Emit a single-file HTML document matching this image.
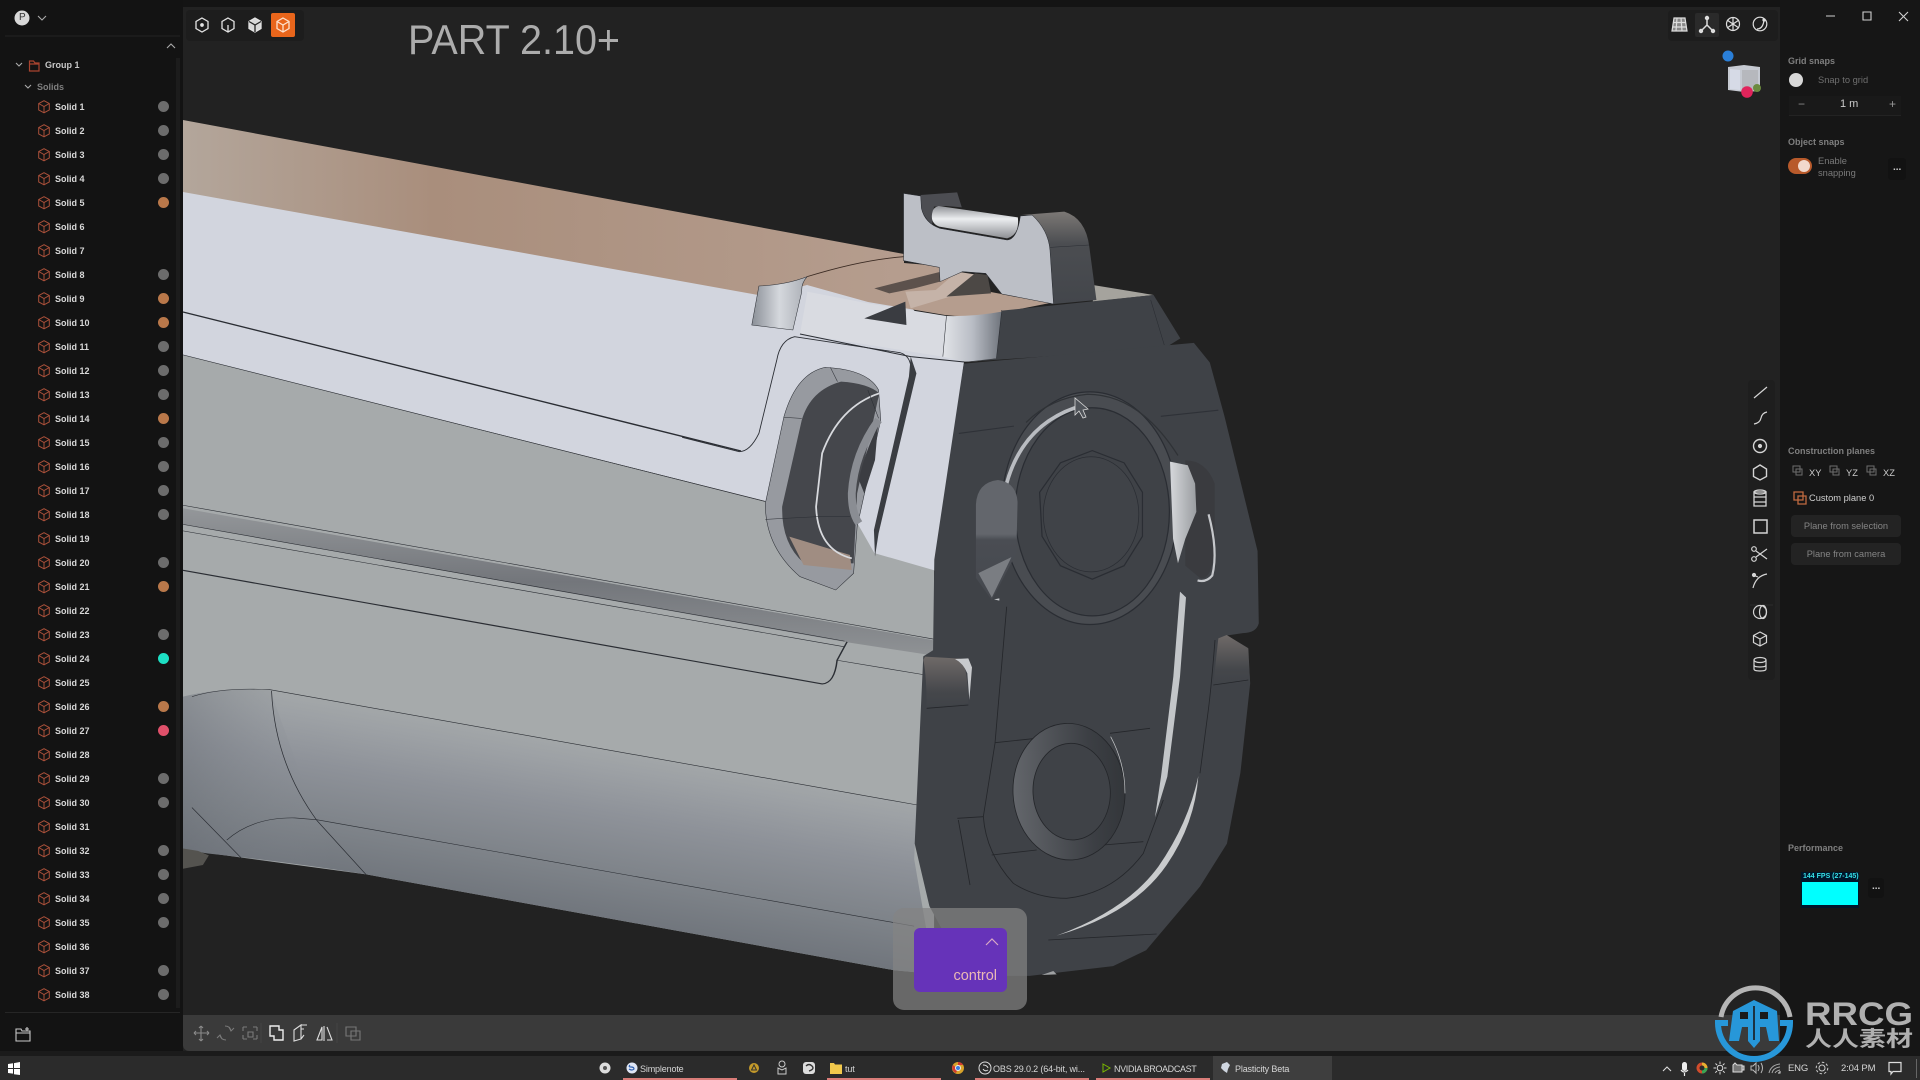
<!DOCTYPE html>
<html><head><meta charset="utf-8"><title>Plasticity</title>
<style>
html,body{margin:0;padding:0;width:1920px;height:1080px;overflow:hidden;background:#222;font-family:"Liberation Sans","Noto Sans CJK SC",sans-serif}
.a{position:absolute}
#vp{position:absolute;left:0;top:0;width:1920px;height:1080px}
#left{position:absolute;left:0;top:0;width:183px;height:1051px;background:#131313}
#right{position:absolute;left:1780px;top:0;width:140px;height:1056px;background:#161616}
#top{position:absolute;left:183px;top:0;width:1597px;height:7px;background:#141414}
#list{position:absolute;left:0;top:95px;width:176px}
.r{height:24px;position:relative;color:#d8d8d8;font-size:9px;font-weight:bold;line-height:24px}
.r span{position:absolute;left:55px;top:0}
.r svg{position:absolute;left:38px;top:5px}
.r i{position:absolute;left:157.5px;top:5.5px;width:11px;height:11px;border-radius:50%;background:#6c6c6c}
.o i{background:#b9784a}.c i{background:#1de0c4}.p i{background:#e0506a}.n i{display:none}
.t{position:absolute;white-space:nowrap}
.lab{color:#7f7f7f;font-size:9px;font-weight:bold}
.tb{position:absolute;top:1062px;color:#d6d6d6;font-size:9px;letter-spacing:-.15px;white-space:nowrap;line-height:14px}
.ul{position:absolute;top:1078px;height:2px;background:#d97c78}
.btn{position:absolute;left:1791px;width:110px;height:22px;background:#232323;border-radius:4px;color:#858585;font-size:9.3px;text-align:center;line-height:22px}
</style></head><body>
<svg id="vp" viewBox="0 0 1920 1080" xmlns="http://www.w3.org/2000/svg">
<defs>
<linearGradient id="tan" gradientUnits="userSpaceOnUse" x1="183" y1="0" x2="900" y2="0"><stop offset="0" stop-color="#b3a69b"/><stop offset=".35" stop-color="#a98e7c"/><stop offset="1" stop-color="#b59d8e"/></linearGradient>
<linearGradient id="low" gradientUnits="userSpaceOnUse" x1="800" y1="880" x2="700" y2="1330"><stop offset="0" stop-color="#a5a9aa"/><stop offset=".15" stop-color="#9da1a5"/><stop offset=".4" stop-color="#8e9299"/><stop offset=".75" stop-color="#7d8288"/><stop offset="1" stop-color="#70757c"/></linearGradient>
<linearGradient id="lowl" gradientUnits="userSpaceOnUse" x1="0" y1="0" x2="300" y2="0"><stop offset="0" stop-color="#6a6f76" stop-opacity=".4"/><stop offset="1" stop-color="#8d9299" stop-opacity="0"/></linearGradient>
<linearGradient id="rail" x1="0" y1="0" x2="0" y2="1"><stop offset="0" stop-color="#94979a"/><stop offset=".5" stop-color="#73767b"/><stop offset="1" stop-color="#8f9295"/></linearGradient>
<linearGradient id="rnd" x1="0" y1="0" x2="1" y2="0"><stop offset="0" stop-color="#e2e4e8"/><stop offset=".5" stop-color="#b9bdc5"/><stop offset="1" stop-color="#6f747c"/></linearGradient>
<linearGradient id="rnd2" x1="0" y1="0" x2="1" y2="0"><stop offset="0" stop-color="#8a8f97"/><stop offset=".5" stop-color="#d5d8dd"/><stop offset="1" stop-color="#a9adb4"/></linearGradient>
<linearGradient id="pill" x1="0" y1="0" x2="0" y2="1"><stop offset="0" stop-color="#8f9196"/><stop offset=".4" stop-color="#eceef0"/><stop offset="1" stop-color="#8d8f94"/></linearGradient>
<linearGradient id="sr" x1="0" y1="0" x2="0" y2="1"><stop offset="0" stop-color="#7c7875"/><stop offset=".35" stop-color="#4b4d51"/><stop offset="1" stop-color="#43464b"/></linearGradient>
<linearGradient id="ring" x1="0" y1="0" x2="1" y2="0"><stop offset="0" stop-color="#63666b"/><stop offset=".7" stop-color="#3c3f44"/><stop offset="1" stop-color="#33363a"/></linearGradient>
<linearGradient id="blk" x1="0" y1="0" x2="0" y2="1"><stop offset="0" stop-color="#6f6a68"/><stop offset=".7" stop-color="#45474b"/><stop offset="1" stop-color="#404348"/></linearGradient>
<linearGradient id="bmp" x1="0" y1="0" x2="0" y2="1"><stop offset="0" stop-color="#63666c"/><stop offset=".45" stop-color="#63666c"/><stop offset=".5" stop-color="#4a4d53"/><stop offset="1" stop-color="#45484e"/></linearGradient>
<linearGradient id="str" x1="0" y1="0" x2="1" y2="0"><stop offset="0" stop-color="#d6d8db"/><stop offset="1" stop-color="#9a9da1"/></linearGradient>
</defs>
<rect width="1920" height="1080" fill="#222"/>

<!-- light side of slide -->
<path fill="#d2d5de" d="M183,190 L764,295 L807,283 L904,300 L964,362 L936,571 L875,557 L765,501 L183,355 Z"/>

<!-- slide: zoom-11 coords -->
<g transform="translate(183,400) scale(.4974,.3827)" fill="none" stroke="#2a2d33" stroke-width="1.5">
<path stroke="none" fill="#a6aaab" d="M0,-118 L360,0 L1170,265 L1355,320 L1390,400 L1510,445 L1510,1500 L1430,1490 L370,1240 L0,1175 Z"/>
<path d="M0,-118 L1170,265"/>
<path stroke="none" fill="url(#rail)" d="M0,283 L1510,628 L1510,668 L1330,632 L0,325 Z"/>
<path d="M0,275 L1510,625"/>
<path d="M0,325 L1330,630"/>
<path d="M0,342 L1330,645"/>
<path stroke-width="3" d="M0,445 L1285,742 Q1310,740 1315,680 L1335,632"/>
<path d="M1315,680 L1490,718"/>
<path stroke="none" fill="url(#low)" d="M0,775 Q80,750 175,757 L1475,1058 L1470,1200 L1510,1500 L1430,1490 L370,1240 Q200,1205 50,1185 L0,1175 Z"/>
<path stroke="none" fill="url(#lowl)" d="M0,775 Q80,750 175,757 L270,1100 L368,1240 L0,1175 Z"/>
<path d="M18,775 Q80,750 175,757 L1475,1058"/>
<path d="M178,760 Q185,950 270,1100 L368,1240"/>
<path d="M88,1150 Q140,1090 225,1092 L270,1097 L1470,1375"/>
<path d="M18,1065 L118,1198"/>
<path stroke="none" fill="#54534f" d="M0,1172 L30,1178 L52,1190 L40,1215 L0,1225 Z"/>
</g>

<!-- long slide line -->
<path d="M183,312 L741,451" fill="none" stroke="#2a2d33" stroke-width="1.4"/>

<!-- top + upper slide: zoom-8 coords -->
<g transform="translate(700,160) scale(.35714,.33333)" stroke="#2a2d33" stroke-width="2.5">
<path stroke="none" fill="url(#tan)" transform="scale(2.8,3) translate(-700,-160)" d="M183,120 L904,254 L904,265 L807,285 L764,296 L183,192 Z"/>
<path fill="url(#tan)" transform="scale(2.8,3) translate(-700,-160)" stroke="none" d="M807,285 Q860,265 904,263 L940,266 L980,290 L1050,303 L1000,313 Q970,318 945,315 L868,302 Z"/>
<path fill="none" stroke="#3a2a22" d="M300,350 Q450,300 570,290"/>
<path fill="url(#rnd2)" stroke-width="1.5" d="M165,378 Q240,375 300,350 Q283,370 285,395 L260,510 L145,495 Z"/>
<path fill="#d9dbe1" stroke="none" d="M300,395 L470,430 L690,468 L680,590 L280,522 L300,400 Z"/>
<path fill="url(#rnd)" stroke="none" d="M690,468 Q770,470 845,455 L830,595 Q780,605 740,605 L680,590 Z"/>
<path fill="none" stroke-width="1.5" d="M690,468 L680,590"/>
<path fill="none" stroke-width="3" d="M280,522 L590,590 L740,606"/>
<path fill="none" stroke-width="2.5" d="M-50,832 L110,875 Q140,875 165,820 L215,600 Q225,540 265,530 L560,578 Q595,590 590,640"/>
<path stroke="none" fill="#3a3d42" d="M590,590 L606,640 L500,1120 L490,1190 L487,1110 L585,650 Z"/>

<!-- ejection port -->
<path fill="#979aa0" stroke-width="1.5" d="M350,622 Q470,628 500,690 L506,780 L440,1100 L430,1240 L380,1290 L280,1250 Q182,1160 183,1030 L235,770 Q270,640 350,622 Z"/>
<path fill="#45474c" stroke="none" d="M395,665 Q470,670 502,700 L440,1000 L430,1210 L290,1208 Q228,1150 230,1040 L285,780 Q310,690 395,665 Z"/>
<path fill="#a08d82" stroke="none" d="M250,1130 L420,1185 L425,1230 L290,1215 Z"/>
<path fill="none" stroke="#d8dade" stroke-width="5" d="M502,700 Q390,740 342,880 L325,1040 Q330,1170 425,1195"/>
<path fill="none" stroke="#8a8d93" stroke-width="22" d="M500,780 Q432,880 425,1000 Q425,1060 445,1090"/>
<path fill="#3b3d42" stroke="none" d="M498,800 Q460,880 445,960 L460,1000 L490,900 Z"/>
<path fill="none" stroke-width="1.5" d="M183,1078 L330,1070 L420,1070 M235,772 L285,775 M365,622 L385,665 M500,775 L470,690"/>

<!-- notch -->
<path stroke="none" fill="#3a3c41" d="M460,475 L575,425 L578,495 Z"/>
<path stroke="none" fill="#5c514c" d="M488,385 L675,335 L672,365 L600,385 L530,400 Z"/>
<path stroke="none" fill="#c5b3a8" d="M575,395 L660,390 L720,335 L780,345 L805,395 L700,410 L590,445 Z"/>
<path stroke="none" fill="#4c4845" d="M770,340 L805,345 L815,400 L690,410 Z"/>

<!-- block behind sight -->
<path stroke="none" fill="#a5a39d" d="M1100,375 L1270,405 L1100,425 Z"/>
<path stroke="none" fill="#3f4247" d="M845,452 L1270,405 L1345,535 L1300,565 L740,606 L830,595 Z"/>
<path fill="none" stroke-width="1.5" d="M845,450 L830,595 M1262,420 L1300,555"/>
<!-- sight -->
<path fill="url(#sr)" stroke="none" d="M900,165 L1020,155 Q1080,175 1090,260 L1110,420 L990,432 L980,270 Q975,210 930,165 Z"/>
<path fill="none" stroke-width="1.5" d="M980,262 L1090,255"/>
<path fill="#4c4d52" stroke="none" d="M618,105 L720,97 L733,142 L690,138 L655,140 L650,195 Q625,170 618,140 Z"/>
<path fill="#bcbfc6" stroke-width="1.5" d="M570,100 L618,108 L620,145 Q630,190 672,205 L860,240 Q888,238 897,168 L930,165 Q975,210 980,270 L990,432 L845,402 L800,340 L735,335 L672,365 L670,322 L570,302 Z"/>
<path fill="url(#pill)" stroke="none" d="M668,138 L890,172 Q895,225 860,235 L670,200 Q645,190 650,160 Q652,142 668,138 Z"/>
</g>

<!-- barrel face: display coords -->
<g transform="scale(1.2245)">
<path fill="#3f4247" d="M787,297 L975,280 L988,296 L1000,340 L1027,450 L1028,509 Q1026,517 1015,517 L1002,519 L1019,529 L1021,558 L1013,631 L1002,689 L980,724 L936,776 L909,789 L841,797 L790,797 L759,740 L747,689 L754,536 L762,531 L763,457 Z"/>
<path d="M783,354 L828,348 M948,340 L995,335" fill="none" stroke="#2a2d33" stroke-width=".9" opacity=".8"/>
<ellipse cx="890" cy="415" rx="72" ry="95" fill="#494c51" stroke="#2a2d33"/>
<ellipse cx="892" cy="418" rx="63" ry="85" fill="#3f4247" stroke="#2a2d33"/>
<polygon points="866,378 892,368 918,378 933,402 933,438 918,462 892,473 866,462 851,438 849,402" fill="#3f4247" stroke="#2a2d33"/>
<ellipse cx="891" cy="420" rx="39" ry="47" fill="#404348" stroke="#2a2d33" stroke-width=".6"/>
<path d="M822,395 Q835,348 878,333" fill="none" stroke="#b9bcc1" stroke-width="3"/>
<path d="M838,345 Q858,325 888,322 Q930,322 962,372" fill="none" stroke="#2f3236" stroke-width="1"/>
<path d="M968,376 Q985,376 992,395 L992,445 Q990,475 980,472 L968,462 Z" fill="#3a3b3f"/>
<path d="M955.500,377 L970,380 L976,395 L977,418 L968,440 L962,460 L958,440 Z" fill="url(#str)"/>
<path d="M987,420 Q995,450 990,470 Q985,476 978,474" fill="none" stroke="#c5c7cb" stroke-width="1.800"/>
<path d="M797,412 Q798,394 815,392 Q830,394 831,410 L830,452 L810,490 L797,472 Z" fill="url(#bmp)"/>
<path d="M799,468 L826,455 L810,488 Z" fill="#7a7d82"/>
</g>

<!-- lower face: zoom-9 coords -->
<g transform="translate(880,560) scale(.33333)" fill="none" stroke="#24262a" stroke-width="2.5">
<path stroke="none" fill="url(#blk)" d="M135,290 L240,296 Q262,310 265,430 L140,442 Q140,350 130,300 Z"/>
<path stroke="none" fill="#c8cacd" d="M225,297 L265,295 L276,322 L268,420 L262,340 Q250,310 225,297 Z"/>
<path stroke="none" fill="url(#blk)" d="M1015,235 L1040,225 L1105,265 L1110,365 L1000,372 Z"/>
<path d="M1000,375 L1105,360"/>
<path d="M1005,240 Q995,370 985,450 L960,640"/>
<path d="M380,140 L345,550 L310,770 Q318,880 400,970 Q470,1015 560,1015 Q700,1000 790,880 L850,720"/>
<path d="M232,775 L310,770 M235,780 L270,975"/>
<path d="M345,548 L470,535 M690,520 L810,505 M335,885 L470,870 M670,855 L790,845 M505,1140 L830,1122 M265,435 L140,445"/>
<ellipse cx="567" cy="695" rx="168" ry="205" fill="url(#ring)" transform="rotate(-3 567 695)"/>
<ellipse cx="575" cy="695" rx="116" ry="145" fill="#3f4247" transform="rotate(-3 575 695)"/>
<path stroke="#c8cacc" stroke-width="2" d="M692,530 Q735,610 735,700"/>
<path stroke="none" fill="#c3c6c9" d="M900,95 L918,112 L900,350 L862,650 L825,772 L843,650 L880,350 Z"/>
<path stroke="none" fill="#c9cbcd" d="M955,648 Q945,790 860,915 Q760,1060 530,1127 Q740,1050 835,920 Q925,790 955,648 Z"/>
<path stroke="none" fill="#9fa1a3" d="M485,1245 L520,1233 L530,1243 Z"/>
<path stroke="none" fill="#c5c7ca" d="M342,118 L358,115 L358,122 Z"/>
</g>

<!-- cursor -->
<path d="M1075,398 L1075,415 L1079,411 L1083,418 L1086,417 L1083,410 L1088,409 Z" fill="#50545a" stroke="#d8d8d8" stroke-width=".8"/>

<!-- PART text -->
<text x="408" y="54" font-family="Liberation Sans" font-size="42" fill="#acacac" textLength="212" lengthAdjust="spacingAndGlyphs">PART 2.10+</text>
</svg>

<div id="top"></div>

<!-- top-left toolbar -->
<svg class="a" style="left:183px;top:7px" width="125" height="36" fill="none" stroke="#e4e4e4" stroke-width="1.3">
<rect x="3" y="3" width="118" height="31" rx="4" fill="#1d1d1d" stroke="none"/>
<path d="M19 11l6 3.5v7L19 25l-6-3.5v-7z"/><circle cx="19" cy="18" r="1.2" fill="#e4e4e4"/>
<path d="M45 11l6 3.5v7L45 25l-6-3.5v-7zM45 18v7"/>
<path d="M72 11l6 3.5v7L72 25l-6-3.5v-7z" fill="#d8d8d8"/><path d="M66 14.5l6 3.5 6-3.5M72 18v7" stroke="#222"/>
<rect x="88" y="6" width="24" height="24" rx="2" fill="#e8651b" stroke="none"/>
<path d="M100 11l6 3.5v7L100 25l-6-3.5v-7zM94 14.5l6 3.5 6-3.5M100 18v7" stroke="#fde0cc"/>
</svg>

<!-- left panel -->
<div id="left">
<svg class="a" style="left:0;top:0" width="183" height="100" fill="none" stroke="#aaa" stroke-width="1.2">
<circle cx="22" cy="18" r="7.5" fill="#d8d8d8" stroke="none"/>
<path d="M38 16l4 4 4-4M167 48l4-4 4 4M16 63l3 3 3-3M25 85l3 3 3-3" stroke-width="1.1"/>
<path d="M5 36H180" stroke="#232323" stroke-width="1"/>
<path d="M29.5 61h4l1.5 2h4v8h-9.500zM29.500 64h9.500" stroke="#a8432f"/>
</svg>
<div class="t" style="left:19px;top:12px;font-size:10px;color:#333">P</div>
<div class="t" style="left:45px;top:60px;font-size:9px;font-weight:bold;color:#c8c8c8">Group 1</div>
<div class="t" style="left:37px;top:82px;font-size:9px;font-weight:bold;color:#7f7f7f">Solids</div>
<svg width="0" height="0" style="position:absolute"><defs><g id="cb" fill="none" stroke="#a9503a" stroke-width="1"><path d="M6 .7l5.300 2.800v6.500L6 12.800.7 10V3.500zM.7 3.500L6 6.500l5.300-3M6 6.500v6.300"/></g></defs></svg>
<div id="list">
<div class="r"><svg width="13" height="15"><use href="#cb"/></svg><span>Solid 1</span><i></i></div>
<div class="r"><svg width="13" height="15"><use href="#cb"/></svg><span>Solid 2</span><i></i></div>
<div class="r"><svg width="13" height="15"><use href="#cb"/></svg><span>Solid 3</span><i></i></div>
<div class="r"><svg width="13" height="15"><use href="#cb"/></svg><span>Solid 4</span><i></i></div>
<div class="r o"><svg width="13" height="15"><use href="#cb"/></svg><span>Solid 5</span><i></i></div>
<div class="r n"><svg width="13" height="15"><use href="#cb"/></svg><span>Solid 6</span><i></i></div>
<div class="r n"><svg width="13" height="15"><use href="#cb"/></svg><span>Solid 7</span><i></i></div>
<div class="r"><svg width="13" height="15"><use href="#cb"/></svg><span>Solid 8</span><i></i></div>
<div class="r o"><svg width="13" height="15"><use href="#cb"/></svg><span>Solid 9</span><i></i></div>
<div class="r o"><svg width="13" height="15"><use href="#cb"/></svg><span>Solid 10</span><i></i></div>
<div class="r"><svg width="13" height="15"><use href="#cb"/></svg><span>Solid 11</span><i></i></div>
<div class="r"><svg width="13" height="15"><use href="#cb"/></svg><span>Solid 12</span><i></i></div>
<div class="r"><svg width="13" height="15"><use href="#cb"/></svg><span>Solid 13</span><i></i></div>
<div class="r o"><svg width="13" height="15"><use href="#cb"/></svg><span>Solid 14</span><i></i></div>
<div class="r"><svg width="13" height="15"><use href="#cb"/></svg><span>Solid 15</span><i></i></div>
<div class="r"><svg width="13" height="15"><use href="#cb"/></svg><span>Solid 16</span><i></i></div>
<div class="r"><svg width="13" height="15"><use href="#cb"/></svg><span>Solid 17</span><i></i></div>
<div class="r"><svg width="13" height="15"><use href="#cb"/></svg><span>Solid 18</span><i></i></div>
<div class="r n"><svg width="13" height="15"><use href="#cb"/></svg><span>Solid 19</span><i></i></div>
<div class="r"><svg width="13" height="15"><use href="#cb"/></svg><span>Solid 20</span><i></i></div>
<div class="r o"><svg width="13" height="15"><use href="#cb"/></svg><span>Solid 21</span><i></i></div>
<div class="r n"><svg width="13" height="15"><use href="#cb"/></svg><span>Solid 22</span><i></i></div>
<div class="r"><svg width="13" height="15"><use href="#cb"/></svg><span>Solid 23</span><i></i></div>
<div class="r c"><svg width="13" height="15"><use href="#cb"/></svg><span>Solid 24</span><i></i></div>
<div class="r n"><svg width="13" height="15"><use href="#cb"/></svg><span>Solid 25</span><i></i></div>
<div class="r o"><svg width="13" height="15"><use href="#cb"/></svg><span>Solid 26</span><i></i></div>
<div class="r p"><svg width="13" height="15"><use href="#cb"/></svg><span>Solid 27</span><i></i></div>
<div class="r n"><svg width="13" height="15"><use href="#cb"/></svg><span>Solid 28</span><i></i></div>
<div class="r"><svg width="13" height="15"><use href="#cb"/></svg><span>Solid 29</span><i></i></div>
<div class="r"><svg width="13" height="15"><use href="#cb"/></svg><span>Solid 30</span><i></i></div>
<div class="r n"><svg width="13" height="15"><use href="#cb"/></svg><span>Solid 31</span><i></i></div>
<div class="r"><svg width="13" height="15"><use href="#cb"/></svg><span>Solid 32</span><i></i></div>
<div class="r"><svg width="13" height="15"><use href="#cb"/></svg><span>Solid 33</span><i></i></div>
<div class="r"><svg width="13" height="15"><use href="#cb"/></svg><span>Solid 34</span><i></i></div>
<div class="r"><svg width="13" height="15"><use href="#cb"/></svg><span>Solid 35</span><i></i></div>
<div class="r n"><svg width="13" height="15"><use href="#cb"/></svg><span>Solid 36</span><i></i></div>
<div class="r"><svg width="13" height="15"><use href="#cb"/></svg><span>Solid 37</span><i></i></div>
<div class="r"><svg width="13" height="15"><use href="#cb"/></svg><span>Solid 38</span><i></i></div>
</div>
<div class="a" style="left:176px;top:58px;width:4px;height:950px;background:#1c1c1c"></div>
<div class="a" style="left:5px;top:1012px;width:175px;height:1px;background:#262626"></div>
<svg class="a" style="left:14px;top:1026px" width="18" height="18" fill="none" stroke="#c8c8c8" stroke-width="1.1"><path d="M2 3h5l1 2h8v10H2zM2 7h14M13 1v4M11 3h4"/></svg>
</div>

<!-- bottom toolbar -->
<div class="a" style="left:183px;top:1015px;width:1597px;height:36px;background:#3a3a3a;border-radius:0 0 0 6px"></div>
<div class="a" style="left:0;top:1051px;width:1920px;height:5px;background:#1b1b1b"></div>
<svg class="a" style="left:183px;top:1015px" width="200" height="36" fill="none" stroke="#8a8a8a" stroke-width="1.1">
<path d="M18 11v15M11 18h15M18 11l-2 2M18 11l2 2M18 26l-2-2M18 26l2-2M11 18l2-2M11 18l2 2M26 18l-2-2M26 18l-2 2"/>
<path d="M37 20q1 5 6 5M48 16q-1-5-6-5M46 12l2 4 3-3M39 24l-2-4-3 3" stroke="#7a7a7a"/>
<path d="M60 12h4M70 12h4M60 24h4M70 24h4M60 12v4M60 20v4M74 12v4M74 20v4M65 17h5v5h-5z" stroke="#7a7a7a"/>
<path d="M87 11h9v4h4v10h-9v-4h-4z" stroke="#eee" stroke-width="1.4"/>
<path d="M111 15l7-5v14l-7 2zM118 10h6M118 14h3M118 24l3-4" stroke="#ddd"/>
<path d="M134 25l5-13v13zM144 12l5 13h-5M141 11v15" stroke="#ddd"/>
<path d="M163 12h10v9h-10zM168 16h9v9h-9z" stroke="#777"/>
<path d="M78 8V28M154 8V28" stroke="#444" stroke-width="1"/>
</svg>

<!-- control overlay -->
<div class="a" style="left:893px;top:908px;width:134px;height:102px;border-radius:11px;background:rgba(132,132,132,.72)"></div>
<div class="a" style="left:914px;top:928px;width:93px;height:64px;border-radius:6px;background:#6633b9"></div>
<svg class="a" style="left:985px;top:937px" width="16" height="10" fill="none" stroke="#d9a9c5" stroke-width="1.2"><path d="M1 8l6-6 6 6"/></svg>
<div class="t" style="right:923px;top:967px;font-size:14.5px;color:#eab9b5;line-height:18px">control</div>

<!-- top-right toolbar -->
<svg class="a" style="left:1665px;top:7px" width="115" height="36" fill="none" stroke="#dedede" stroke-width="1.2">
<rect x="3" y="3" width="110" height="31" rx="4" fill="#1d1d1d" stroke="none"/>
<rect x="30" y="6" width="24" height="24" rx="2" fill="#2a2a2a" stroke="none"/>
<path d="M9 11h11l2 13H7zM8.500 15.500h12.500M8 20h13.500M12 11l-1 13M16 11l1 13" fill="#888"/>
<path d="M42 11v7M42 18l-6 6M42 18l6 6" stroke-width="1.5"/><circle cx="42" cy="11" r="1.600" fill="#ddd"/><circle cx="36" cy="24" r="1.600" fill="#ddd"/><circle cx="48" cy="24" r="1.600" fill="#ddd"/>
<circle cx="68" cy="17" r="6.500"/><path d="M68 10v14M62 13l12 8M62 21l12-8"/>
<circle cx="95" cy="17" r="6.800"/><path d="M92 22q6 0 7-9"/><circle cx="99" cy="13" r="1" fill="#ddd"/>
</svg>

<!-- viewcube -->
<svg class="a" style="left:1718px;top:47px" width="55" height="56">
<path d="M10 20l16-2 16 2v24l-16 1-16-2z" fill="#c6cad2"/>
<path d="M24 23h16v20l-16 1z" fill="#b6b8bd"/><path d="M12 22l10 1v20l-10-1z" fill="#d6dae6"/>
<circle cx="39" cy="41" r="4" fill="#6b8a3e"/>
<circle cx="10" cy="9" r="5.500" fill="#2a7fd8"/>
<circle cx="29" cy="45" r="5.800" fill="#e1245b"/>
</svg>

<!-- right panel -->
<div id="right"></div>
<svg class="a" style="left:1820px;top:5px" width="100" height="22" fill="none" stroke="#d0d0d0" stroke-width="1.1"><path d="M6 11h9M43 7h8v8h-8zM79 7l9 9M88 7l-9 9"/></svg>
<div class="t lab" style="left:1788px;top:56px">Grid snaps</div>
<div class="a" style="left:1789px;top:73px;width:14px;height:14px;border-radius:50%;background:#d8d8d8"></div>
<div class="t" style="left:1818px;top:75px;font-size:9.3px;color:#6f6f6f">Snap to grid</div>
<div class="a" style="left:1789px;top:96px;width:112px;height:19px;background:#191919;border-bottom:1px solid #232323"></div>
<div class="t" style="left:1798px;top:97px;font-size:12px;color:#888">−</div>
<div class="t" style="left:1840px;top:98px;font-size:11px;color:#ccc">1 m</div>
<div class="t" style="left:1889px;top:97px;font-size:12px;color:#999">+</div>
<div class="t lab" style="left:1788px;top:137px">Object snaps</div>
<div class="a" style="left:1788px;top:158px;width:24px;height:16px;border-radius:8px;background:#b85a2b"></div>
<div class="a" style="left:1798px;top:160px;width:12px;height:12px;border-radius:50%;background:#f2d9cd"></div>
<div class="t" style="left:1818px;top:155px;font-size:9.3px;color:#7a7a7a;line-height:12px">Enable<br>snapping</div>
<div class="a" style="left:1888px;top:158px;width:18px;height:22px;background:#121212;border-radius:3px"></div>
<div class="t" style="left:1893px;top:162px;font-size:10px;font-weight:bold;color:#ccc">...</div>

<!-- vertical tools -->
<svg class="a" style="left:1745px;top:378px" width="35" height="304" fill="none" stroke="#d4d4d4" stroke-width="1.2">
<rect x="3" y="2" width="27" height="300" rx="4" fill="#1e1e1e" stroke="none"/>
<path d="M9 20L22 9"/>
<path d="M9 46q6-1 7-6t6-6"/>
<circle cx="15" cy="68" r="6.500" stroke-width="1.400"/><circle cx="15" cy="68" r="1.500" fill="#d4d4d4"/>
<path d="M15 87l6.500 4v7.500L15 102l-6.500-3.500V91z" stroke-width="1.400"/>
<path d="M9 114h12v5H9zM9 119h12v5H9zM9 124h12v4H9z" stroke-width="1.300"/><ellipse cx="15" cy="114" rx="6" ry="2"/>
<rect x="9" y="142" width="13" height="13" stroke-width="1.500"/>
<circle cx="9" cy="171" r="2.300"/><circle cx="9" cy="181" r="2.300"/><path d="M11 173l11 8M11 179l11-8"/>
<path d="M8 210q3-12 14-14M8 197l5 2"/><circle cx="9" cy="197" r="1.500" fill="#d4d4d4"/>
<path d="M5 227H28" stroke="#2a2a2a"/>
<ellipse cx="15" cy="234" rx="6.500" ry="6.500"/><ellipse cx="18" cy="234" rx="3.500" ry="6.500"/>
<path d="M15 254l6.500 3.500v7L15 268l-6.500-3.500v-7zM8.500 257.500L15 261l6.500-3.500M15 261v7"/>
<path d="M9 282v9q0 2 6 2t6-2v-9"/><ellipse cx="15" cy="282" rx="6" ry="2.500"/><path d="M9 287q0 2 6 2t6-2"/>
</svg>

<!-- construction planes -->
<div class="t lab" style="left:1788px;top:446px">Construction planes</div>
<svg class="a" style="left:1790px;top:461px" width="110" height="52" fill="none" stroke="#6d6d6d" stroke-width="1">
<path d="M3 5h7v6H3zM6 8h6v6H6z"/><path d="M40 5h7v6h-7zM43 8h6v6h-6z"/><path d="M77 5h7v6h-7zM80 8h6v6h-6z"/>
<path d="M4 31h9v8H4zM8 35h8v8H8z" stroke="#c06a40" stroke-width="1.300"/>
</svg>
<div class="t" style="left:1809px;top:468px;font-size:9.3px;color:#ccc">XY</div>
<div class="t" style="left:1846px;top:468px;font-size:9.3px;color:#ccc">YZ</div>
<div class="t" style="left:1883px;top:468px;font-size:9.3px;color:#ccc">XZ</div>
<div class="t" style="left:1809px;top:493px;font-size:9.3px;color:#cfcfcf">Custom plane 0</div>
<div class="btn" style="top:515px">Plane from selection</div>
<div class="btn" style="top:543px">Plane from camera</div>

<!-- performance -->
<div class="t lab" style="left:1788px;top:843px">Performance</div>
<div class="a" style="left:1801px;top:872px;width:58px;height:36px;background:#00152a"></div>
<div class="t" style="left:1803px;top:872px;font-size:7px;font-weight:bold;color:#35e0e8;line-height:9px">144 FPS (27-145)</div>
<div class="a" style="left:1802px;top:882px;width:56px;height:23px;background:#00ffff"></div>
<div class="a" style="left:1868px;top:878px;width:16px;height:20px;background:#121212;border-radius:3px"></div>
<div class="t" style="left:1872px;top:881px;font-size:10px;font-weight:bold;color:#ccc">...</div>

<!-- taskbar -->
<div class="a" style="left:0;top:1056px;width:1920px;height:24px;background:#2b2b2b"></div>
<div class="a" style="left:1213px;top:1056px;width:119px;height:24px;background:#3e3e3e"></div>
<div class="ul" style="left:623px;width:114px"></div>
<div class="ul" style="left:827px;width:114px"></div>
<div class="ul" style="left:975px;width:114px"></div>
<div class="ul" style="left:1096px;width:114px"></div>
<svg class="a" style="left:0;top:1056px" width="1920" height="24" fill="none">
<path d="M8 8l5-.7V12H8zM14 7.100L20 6v6h-6zM8 13h5v4.600L8 17zM14 13h6v6l-6-.8z" fill="#fff"/>
<circle cx="605" cy="12" r="5.500" fill="#ddd"/><circle cx="605" cy="12" r="2" fill="#555"/>
<circle cx="632" cy="12" r="5.500" fill="#dfe6f5"/><path d="M629 13q3 2 5 0q0-2-3-2t-1-2" stroke="#2d5fb0" stroke-width="1.200"/>
<circle cx="754" cy="12" r="5" fill="#c49a2a"/><path d="M754 9l2.500 5h-5z" stroke="#333"/>
<circle cx="782" cy="8" r="3" stroke="#ccc"/><path d="M778 18v-6l4 2 4-2v6z" stroke="#ccc"/>
<rect x="803" y="6" width="12" height="12" rx="3" fill="#ddd"/><path d="M806 10q3-3 6 0t-3 5" stroke="#333" stroke-width="1.300"/>
<path d="M830 7h4l1 1.500h7V18h-12z" fill="#f2c94c"/>
<circle cx="958" cy="12" r="6" fill="#d8a32a"/><path d="M958 6a6 6 0 0 1 5.200 3H958zM952.800 9a6 6 0 0 0 3 8l2.500-4z" fill="#d23b32"/><circle cx="958" cy="12" r="2.500" fill="#3c7de0" stroke="#eee"/>
<circle cx="985" cy="12" r="6" stroke="#ddd"/><path d="M983 9q4 0 5 3M988 14q-3 2-5-1" stroke="#ddd"/>
<path d="M1103 8l7 4-7 4z" stroke="#7ab800"/>
<path d="M1222 8l5-2 3 3-2 4-1 4-3-2-3-3z" fill="#cfd6e0"/>
<path d="M1663 15l4-4 4 4" stroke="#ddd" stroke-width="1.100"/>
<rect x="1682" y="6" width="5" height="9" rx="2.500" fill="#eee"/><path d="M1681 14q3 4 7 0M1684.500 17v3" stroke="#eee" stroke-width="1.200"/>
<circle cx="1702" cy="12" r="5.500" fill="#d14c2c"/><path d="M1702 6.500a5.500 5.500 0 0 1 5.500 5.500h-5.500z" fill="#e8b030"/><path d="M1702 12h5.500a5.500 5.500 0 0 1-5.500 5.500z" fill="#3aa655"/><circle cx="1702" cy="12" r="2.500" fill="#2b2b2b"/>
<circle cx="1720" cy="12" r="2.800" stroke="#ddd"/><path d="M1720 5.500v2.500M1720 16v2.500M1713.500 12h2.500M1724 12h2.500M1715.500 7.500l1.700 1.700M1723 15l1.700 1.700M1724.500 7.500l-1.700 1.700M1717 15l-1.700 1.700" stroke="#ddd"/>
<path d="M1733 9l2-2 2 2h5v7h-9zM1742 10h2v4h-2" stroke="#ddd" fill="#777"/>
<path d="M1751 10h2l3-3v10l-3-3h-2zM1758 9q2 3 0 6M1761 7q3 5 0 10" stroke="#bbb"/>
<path d="M1769 17q2-8 11-9M1772 17q1-5 8-6M1775 17q1-2 5-3" stroke="#aaa"/><path d="M1778 17h2v-2" stroke="#ddd"/>
<circle cx="1822" cy="12" r="3" stroke="#ccc"/><circle cx="1822" cy="12" r="5.800" stroke="#ccc" stroke-dasharray="2.500 2"/>
<path d="M1889 6.500h12v9h-8l-2 2.500v-2.500h-2z" stroke="#ddd" stroke-width="1.200"/>
<path d="M1916.500 3v19" stroke="#666"/>
</svg>
<div class="tb" style="left:640px">Simplenote</div>
<div class="tb" style="left:845px">tut</div>
<div class="tb" style="left:993px">OBS 29.0.2 (64-bit, wi...</div>
<div class="tb" style="left:1114px;letter-spacing:-.35px">NVIDIA BROADCAST</div>
<div class="tb" style="left:1235px">Plasticity Beta</div>
<div class="tb" style="left:1788px;font-size:9.5px">ENG</div>
<div class="tb" style="left:1841px;font-size:9.5px">2:04 PM</div>

<!-- watermark logo -->
<svg class="a" style="left:1700px;top:975px" width="220" height="105">
<path d="M21,42 A35,35 0 0 1 90,42" fill="none" stroke="#b5b5b5" stroke-width="5"/>
<path d="M28,48 H18 A36,36 0 0 0 90,48 H80" fill="none" stroke="#2797d9" stroke-width="6"/>
<path d="M33,36 L54,25 L77,36 L79,66 L69,66 L66,52 L60,52 L60,66 L54,73 L48,66 L48,52 L42,52 L39,66 L29,66 Z" fill="#2797d9"/>
<path d="M40,37h8v7h-8zM60,37h8v7h-8z" fill="#1a1a1a"/>
<path d="M53.200,31h1.600v34h-1.600z" fill="#1a1a1a"/>
<text x="105" y="50" font-family="Liberation Sans" font-size="32" font-weight="bold" fill="#b0b0b0" textLength="108" lengthAdjust="spacingAndGlyphs">RRCG</text>
<text x="105" y="71" font-family="Liberation Sans,Noto Sans CJK SC,sans-serif" font-size="21" font-weight="bold" fill="#b0b0b0" textLength="108" lengthAdjust="spacingAndGlyphs">人人素材</text>
</svg>
</body></html>
